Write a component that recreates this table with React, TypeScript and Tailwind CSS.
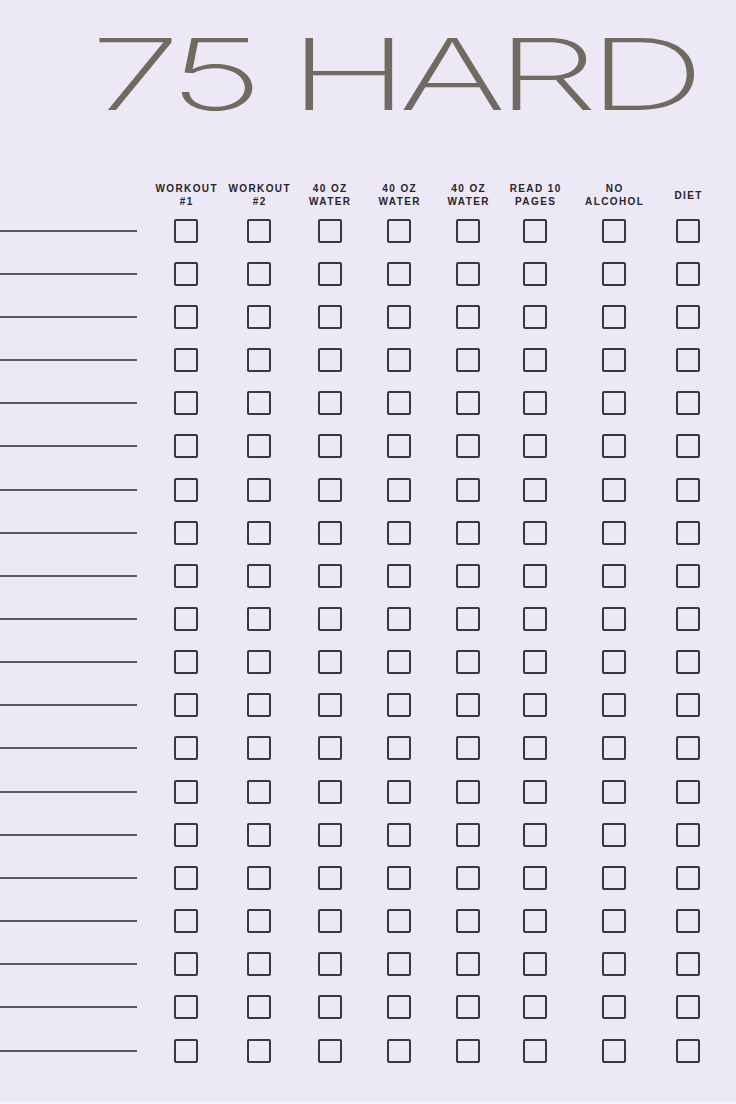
import React from 'react';

const columns = [
    ['WORKOUT', '#1'],
    ['WORKOUT', '#2'],
    ['40 OZ', 'WATER'],
    ['40 OZ', 'WATER'],
    ['40 OZ', 'WATER'],
    ['READ 10', 'PAGES'],
    ['NO', 'ALCOHOL'],
    ['DIET'],
];

const days = Array.from({ length: 20 }, (_, i) => i);

const gridCols = 'grid grid-cols-[149px_74px_72px_69px_70px_68px_66px_92px_56px]';

function Box() {
    return <div className="w-[24px] h-[24px] border-[2px] border-[#3a383e] rounded-[2px]" />;
}

export default function App() {
    return (
        <div className="w-[736px] h-[1104px] overflow-hidden bg-[#ece8f6] border-b-[3px] border-[#f3f0f9]">
            {/* title */}
            <div className="pt-[24px] pl-[90px] h-[181px]">
                <h1
                    className="origin-left scale-x-[1.66] text-[99px] leading-[100px] font-extralight tracking-[-6.5px] text-[#706b61] whitespace-nowrap"
                    style={{ fontFamily: 'Inter, "Noto Sans", sans-serif' }}
                >
                    75 HARD
                </h1>
            </div>

            {/* column headers */}
            <div className={gridCols + ' h-[28px]'}>
                <div />
                {columns.map((c, i) => (
                    <div
                        key={i}
                        className="flex flex-col items-center justify-center text-[10px] leading-[13px] font-bold tracking-[1.4px] text-[#262528]"
                        style={{ fontFamily: '"Liberation Sans", Arial, sans-serif' }}
                    >
                        {c.map((t) => (
                            <span key={t} className="pl-[1.4px]">{t}</span>
                        ))}
                    </div>
                ))}
            </div>

            {/* rows */}
            <div>
                {days.map((d) => (
                    <div key={d} className={gridCols + ' h-[43.16px] items-center'}>
                        <div className="w-[137px] h-[2px] bg-[#5a5865]" />
                        {columns.map((_, i) => (
                            <div key={i} className="flex justify-center">
                                <Box />
                            </div>
                        ))}
                    </div>
                ))}
            </div>
        </div>
    );
}
